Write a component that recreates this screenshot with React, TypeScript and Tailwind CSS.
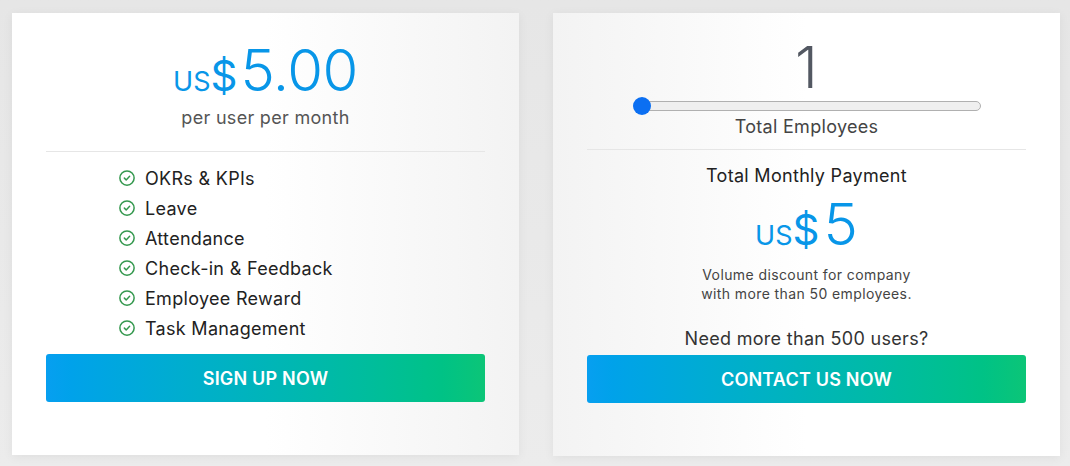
import React from "react";

const font = { fontFamily: "Inter, 'Open Sans', 'Liberation Sans', sans-serif" };

function Check() {
  return (
    <svg width="18" height="18" viewBox="0 0 24 24" fill="none" stroke="#34984e" strokeWidth="2" strokeLinecap="round" strokeLinejoin="round">
      <circle cx="12" cy="12" r="9.5" />
      <path d="m8.5 12.2 2.4 2.4 4.6-4.8" />
    </svg>
  );
}

const features = [
  "OKRs & KPIs",
  "Leave",
  "Attendance",
  "Check-in & Feedback",
  "Employee Reward",
  "Task Management",
];

function Button({ label }: { label: string }) {
  return (
    <div className="flex h-[48px] items-center justify-center rounded-[3px] bg-gradient-to-r from-[#079ff0] to-[#0cc577] text-[18px] font-semibold tracking-[0.2px] text-white">
      {label}
    </div>
  );
}

export default function App() {
  return (
    <div
      className="flex h-[466px] w-[1070px] gap-[34px] bg-gradient-to-b from-[#e6e6e6] to-[#ececec] pl-[12px] pt-[13px]"
      style={font}
    >
      {/* Left card */}
      <div className="flex h-[442px] w-[507px] flex-col bg-gradient-to-r from-white via-white to-[#f3f3f3] px-[34px] shadow-[0_2px_10px_rgba(0,0,0,0.06)]">
        <div className="mt-[28px] flex h-[66px] items-baseline justify-center text-[#0896e8]">
          <span className="text-[27px] font-normal leading-none">US</span>
          <span className="text-[42px] font-normal leading-none">$</span>
          <span className="ml-[3px] text-[58px] font-light leading-none tracking-[-0.5px]">5.00</span>
        </div>
        <div className="-mt-[2px] text-center text-[18px] leading-[26px] tracking-[0.3px] text-[#555]">per user per month</div>
        <div className="mt-[20px] border-t border-[#e6e6e6]" />
        <div className="mt-[15px] flex flex-col gap-[8px] pl-[72px]">
          {features.map((f) => (
            <div key={f} className="flex h-[22px] items-center gap-[9px] text-[18px] tracking-[0.3px] text-[#222]">
              <Check />
              <span>{f}</span>
            </div>
          ))}
        </div>
        <div className="mt-[15px]">
          <Button label="SIGN UP NOW" />
        </div>
      </div>

      {/* Right card */}
      <div className="flex h-[443px] w-[507px] flex-col bg-gradient-to-l from-white via-white to-[#f3f3f3] px-[34px] shadow-[0_2px_10px_rgba(0,0,0,0.06)]">
        <div className="mt-[25px] text-center text-[58px] font-light leading-[58px] text-[#535862]">1</div>
        <div className="relative mx-auto mt-[1px] h-[18px] w-[348px]">
          <div className="absolute left-[4px] right-0 top-[4px] h-[10px] rounded-full border border-[#b0b0b0] bg-[#efefef]" />
          <div className="absolute left-0 top-0 h-[18px] w-[18px] rounded-full bg-[#0b6ff2]" />
        </div>
        <div className="text-center text-[18px] leading-[24px] tracking-[0.3px] text-[#444]">Total Employees</div>
        <div className="mt-[10px] border-t border-[#e6e6e6]" />
        <div className="mt-[14px] text-center text-[18px] leading-[24px] tracking-[0.3px] text-[#222]">Total Monthly Payment</div>
        <div className="mt-[7px] flex h-[56px] items-baseline justify-center text-[#0896e8]">
          <span className="text-[27px] font-normal leading-none">US</span>
          <span className="text-[42px] font-normal leading-none">$</span>
          <span className="ml-[4px] text-[58px] font-light leading-none">5</span>
        </div>
        <div className="mt-[14px] text-center text-[14px] leading-[19px] tracking-[0.4px] text-[#444]">
          Volume discount for company
          <br />
          with more than 50 employees.
        </div>
        <div className="mt-[24px] text-center text-[18px] leading-[24px] tracking-[0.3px] text-[#333]">Need more than 500 users?</div>
        <div className="mt-[4px]">
          <Button label="CONTACT US NOW" />
        </div>
      </div>
    </div>
  );
}
